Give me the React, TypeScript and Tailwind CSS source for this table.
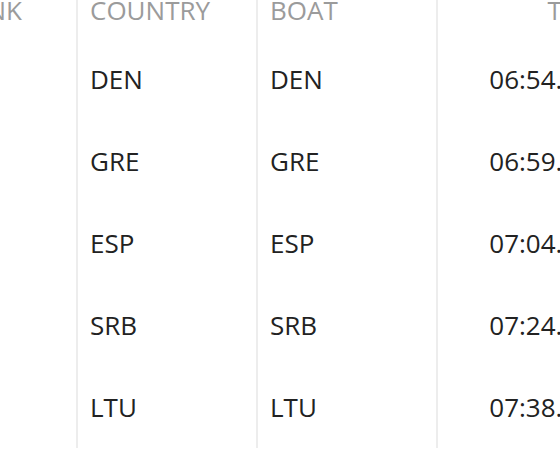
const rows = [
  { country: "DEN", boat: "DEN", time: "06:54.210" },
  { country: "GRE", boat: "GRE", time: "06:59.880" },
  { country: "ESP", boat: "ESP", time: "07:04.350" },
  { country: "SRB", boat: "SRB", time: "07:24.120" },
  { country: "LTU", boat: "LTU", time: "07:38.470" },
]

const head = "h-[38px] text-[26px] leading-[20px] text-[#9b9b9b]"
const cell = "h-[82px] flex items-center text-[26px] font-medium text-[#222222]"

export default function App() {
  return (
    <div className="w-[560px] h-[464px] overflow-hidden bg-white font-['Open_Sans',sans-serif]">
      <div className="flex -ml-[50px] w-[800px]">
        <div className="w-[128px] border-r-2 border-[#ededed]">
          <div className={`${head} pl-1`}>RANK</div>
          {rows.map((r, i) => (
            <div key={i} className="h-[82px]" />
          ))}
        </div>
        <div className="w-[180px] border-r-2 border-[#ededed]">
          <div className={`${head} pl-3`}>COUNTRY</div>
          {rows.map((r, i) => (
            <div key={i} className={`${cell} pl-3`}>
              {r.country}
            </div>
          ))}
        </div>
        <div className="w-[180px] border-r-2 border-[#ededed]">
          <div className={`${head} pl-3`}>BOAT</div>
          {rows.map((r, i) => (
            <div key={i} className={`${cell} pl-3`}>
              {r.boat}
            </div>
          ))}
        </div>
        <div className="w-[180px] pr-[11px] text-right">
          <div className={head}>TIME</div>
          {rows.map((r, i) => (
            <div key={i} className={`${cell} justify-end`}>
              {r.time}
            </div>
          ))}
        </div>
      </div>
    </div>
  )
}
